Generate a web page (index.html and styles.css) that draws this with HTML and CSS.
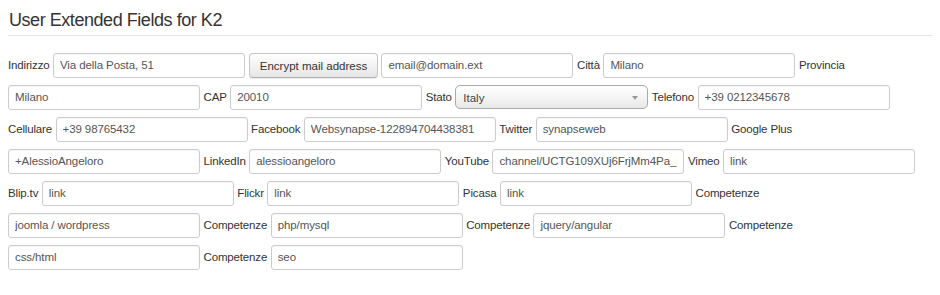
FILE: index.html
```html
<!DOCTYPE html>
<html lang="it">
<head>
<meta charset="utf-8">
<title>User Extended Fields for K2</title>
<link rel="stylesheet" href="styles.css">
</head>
<body>
<h2 class="title">User Extended Fields for K2</h2>
<form class="fields">
  <div class="row">
    <label class="lbl">Indirizzo</label>
    <input class="inp" type="text" value="Via della Posta, 51">
    <button class="btn" type="button">Encrypt mail address</button>
    <input class="inp" type="text" value="email@domain.ext">
    <label class="lbl">Città</label>
    <input class="inp" type="text" value="Milano">
    <label class="lbl">Provincia</label>
  </div>
  <div class="row">
    <input class="inp" type="text" value="Milano">
    <label class="lbl">CAP</label>
    <input class="inp" type="text" value="20010">
    <label class="lbl">Stato</label>
    <div class="sel"><span class="sel-text">Italy</span><span class="sel-arrow"></span></div>
    <label class="lbl">Telefono</label>
    <input class="inp" type="text" value="+39 0212345678">
  </div>
  <div class="row">
    <label class="lbl">Cellulare</label>
    <input class="inp" type="text" value="+39 98765432">
    <label class="lbl">Facebook</label>
    <input class="inp" type="text" value="Websynapse-122894704438381">
    <label class="lbl">Twitter</label>
    <input class="inp" type="text" value="synapseweb">
    <label class="lbl">Google Plus</label>
  </div>
  <div class="row">
    <input class="inp" type="text" value="+AlessioAngeloro">
    <label class="lbl">LinkedIn</label>
    <input class="inp" type="text" value="alessioangeloro">
    <label class="lbl">YouTube</label>
    <input class="inp" type="text" value="channel/UCTG109XUj6FrjMm4Pa_Eg">
    <label class="lbl">Vimeo</label>
    <input class="inp" type="text" value="link">
  </div>
  <div class="row">
    <label class="lbl">Blip.tv</label>
    <input class="inp" type="text" value="link">
    <label class="lbl">Flickr</label>
    <input class="inp" type="text" value="link">
    <label class="lbl">Picasa</label>
    <input class="inp" type="text" value="link">
    <label class="lbl">Competenze</label>
  </div>
  <div class="row">
    <input class="inp" type="text" value="joomla / wordpress">
    <label class="lbl">Competenze</label>
    <input class="inp" type="text" value="php/mysql">
    <label class="lbl">Competenze</label>
    <input class="inp" type="text" value="jquery/angular">
    <label class="lbl">Competenze</label>
  </div>
  <div class="row">
    <input class="inp" type="text" value="css/html">
    <label class="lbl">Competenze</label>
    <input class="inp" type="text" value="seo">
  </div>
</form>
</body>
</html>
```
FILE: styles.css
```css
body {
  margin: 8px;
  background: #fff;
  font-family: "Liberation Sans", Arial, sans-serif;
  font-size: 12px;
  color: #333;
}

.title {
  margin: 2px 0 13px;
  padding: 0 0 5px 1px;
  font-size: 18px;
  line-height: 20px;
  letter-spacing: -0.45px;
  font-weight: normal;
  color: #333;
  border-bottom: 1px solid #e5e5e5;
}

.fields {
  margin: 0;
}

.row {
  display: flex;
  align-items: center;
  gap: 3.5px;
  height: 32px;
}

.lbl {
  white-space: nowrap;
  color: #333;
  font-size: 11.5px;
  letter-spacing: -0.15px;
}

.inp {
  box-sizing: border-box;
  width: 192px;
  height: 25px;
  margin: 0;
  padding: 0 6px;
  border: 1px solid #ccc;
  border-radius: 3px;
  background: #fff;
  font-family: "Liberation Sans", Arial, sans-serif;
  font-size: 11.5px;
  letter-spacing: -0.1px;
  color: #555;
  box-shadow: inset 0 1px 1px rgba(0,0,0,0.04);
}

.btn {
  box-sizing: border-box;
  width: 129px;
  height: 25px;
  margin: 0 0 0 0.5px;
  padding: 2px 8px 0;
  border: 1px solid #c5c5c5;
  border-bottom-color: #b0b0b0;
  border-radius: 4px;
  background: linear-gradient(#ffffff, #e6e6e6);
  font-family: "Liberation Sans", Arial, sans-serif;
  font-size: 11.5px;
  color: #333;
  box-shadow: 0 1px 1px rgba(0,0,0,0.08);
  white-space: nowrap;
}

.sel {
  box-sizing: border-box;
  position: relative;
  width: 193px;
  height: 24px;
  border: 1px solid #aaa;
  border-radius: 5px;
  background: linear-gradient(#ffffff 0%, #f5f5f5 50%, #e8e8e8 100%);
  display: flex;
  align-items: center;
  padding-left: 7px;
}

.sel-text {
  color: #444;
  font-size: 11.5px;
  padding-top: 2px;
}

.sel-arrow {
  position: absolute;
  right: 9px;
  top: 10px;
  width: 0;
  height: 0;
  border-left: 3px solid transparent;
  border-right: 3px solid transparent;
  border-top: 4px solid #999;
}
```
